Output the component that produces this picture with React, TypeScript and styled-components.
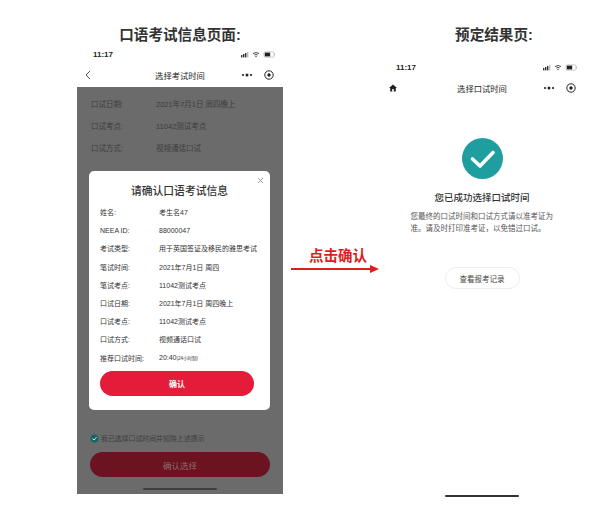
import React from 'react';
import styled, { createGlobalStyle } from 'styled-components';

const GlobalStyle = createGlobalStyle`
  html, body {
    margin: 0;
    padding: 0;
    background: #fff;
    font-family: "Liberation Sans", "Noto Sans CJK SC", sans-serif;
  }
`;

const Page = styled.div`
  width: 608px;
  height: 516px;
  display: flex;
  overflow: hidden;
  padding-left: 77px;
  box-sizing: border-box;
`;

const LeftColumn = styled.div`
  width: 206px;
  height: 494px;
  display: flex;
  flex-direction: column;
`;

const RightColumn = styled.div`
  width: 200px;
  display: flex;
  flex-direction: column;
  margin-left: 6px;
`;

const PageTitle = styled.h1<{ $shift?: number }>`
  margin: 0;
  height: 46px;
  padding: 26px 0 0 ${(p) => p.$shift ?? 0}px;
  box-sizing: border-box;
  font-size: 14.6px;
  line-height: 18px;
  font-weight: 700;
  color: #333;
  text-align: center;
`;

const StatusBar = styled.div<{ $offset: number; $left: number }>`
  height: 17px;
  margin-top: ${(p) => p.$offset}px;
  display: flex;
  align-items: center;
  justify-content: space-between;
  padding: 0 8px 0 ${(p) => p.$left}px;
  font-size: 8px;
  font-weight: 700;
  color: #222;
`;

const NavBar = styled.div<{ $left: number }>`
  height: 24px;
  display: flex;
  align-items: center;
  padding: 0 9px 0 ${(p) => p.$left}px;
  color: #222;
`;

const NavTitle = styled.div<{ $pad: number }>`
  flex: 1;
  text-align: center;
  font-size: 8.3px;
  padding-left: ${(p) => p.$pad}px;
`;

const NavActions = styled.div`
  display: flex;
  align-items: center;
  gap: 11px;
`;

const Overlay = styled.div`
  position: relative;
  flex: 1;
  background: #6b6b6b;
  padding: 5px 0 0 12px;
  display: flex;
  flex-direction: column;
`;

const DimRow = styled.div`
  height: 22px;
  padding-left: 2px;
  display: flex;
  align-items: center;
  font-size: 7.5px;
  color: #3d3d3d;
`;

const DimLabel = styled.span`
  width: 65px;
`;

const Modal = styled.div`
  width: 181px;
  height: 239px;
  margin-top: 13px;
  background: #fff;
  border-radius: 5px;
  position: relative;
  padding: 13px 11px 0;
  box-sizing: border-box;
  display: flex;
  flex-direction: column;
`;

const CloseMark = styled.svg`
  position: absolute;
  top: 6px;
  right: 6px;
`;

const ModalTitle = styled.div`
  font-size: 10.8px;
  line-height: 15px;
  font-weight: 500;
  text-align: center;
  color: #333;
  margin-bottom: 4px;
`;

const InfoRow = styled.div`
  height: 18.2px;
  display: flex;
  align-items: center;
  font-size: 7px;
  color: #333;
  white-space: nowrap;
`;

const InfoLabel = styled.span`
  width: 59px;
  flex: none;
`;

const Small = styled.span`
  font-size: 4.5px;
`;

const ConfirmButton = styled.div`
  height: 25px;
  margin-top: 4px;
  width: 154px;
  border-radius: 13px;
  background: #e41c39;
  color: #fff;
  font-size: 8px;
  font-weight: 700;
  display: flex;
  align-items: center;
  justify-content: center;
`;

const AgreeRow = styled.div`
  margin: 22px 0 0 1px;
  height: 12px;
  display: flex;
  align-items: center;
  gap: 2px;
  font-size: 6.9px;
  color: #3d3d3d;
`;

const AgreeDot = styled.svg`
  flex: none;
`;

const DarkButton = styled.div`
  width: 180px;
  height: 25px;
  margin: 8px 0 0 1px;
  border-radius: 13px;
  background: #6b1320;
  color: #8e6a6e;
  font-size: 8.5px;
  display: flex;
  align-items: center;
  justify-content: center;
`;

const HomeBar = styled.div<{ $dark?: boolean; $width: number }>`
  width: ${(p) => p.$width}px;
  height: 2px;
  background: ${(p) => (p.$dark ? '#3f3f3f' : '#333')};
  border-radius: 1px;
  align-self: center;
`;

const DimHome = styled(HomeBar)`
  position: absolute;
  bottom: 4px;
  left: 66px;
`;

const ArrowColumn = styled.div`
  width: 96px;
  padding: 248px 0 0 8px;
  box-sizing: border-box;
  display: flex;
  flex-direction: column;
`;

const ArrowLabel = styled.div`
  font-size: 14.5px;
  line-height: 17px;
  font-weight: 700;
  color: #dc1e1e;
  padding-left: 18px;
`;

const SuccessBody = styled.div`
  flex: 1;
  display: flex;
  flex-direction: column;
  align-items: center;
  padding: 38px 6px 0 0;
`;

const SuccessTitle = styled.div`
  margin-top: 12px;
  font-size: 9.5px;
  line-height: 14px;
  font-weight: 500;
  color: #333;
`;

const SuccessText = styled.div`
  width: 143px;
  margin-top: 6px;
  font-size: 7.5px;
  line-height: 12px;
  color: #555;
`;

const RecordButton = styled.div`
  margin-top: 32px;
  width: 75px;
  height: 22px;
  box-sizing: border-box;
  border: 1px solid #eee;
  border-radius: 12px;
  font-size: 7.5px;
  color: #444;
  display: flex;
  align-items: center;
  justify-content: center;
`;

const RightHome = styled(HomeBar)`
  margin-top: 206px;
`;

const StatusIcons = () => (
  <svg width="34" height="7" viewBox="0 0 34 7">
    <rect x="0" y="4" width="1.4" height="2.4" fill="#333" />
    <rect x="2" y="3" width="1.4" height="3.4" fill="#333" />
    <rect x="4" y="2" width="1.4" height="4.4" fill="#333" />
    <rect x="6" y="1" width="1.4" height="5.4" fill="#bbb" />
    <path d="M12 2.6 Q15 0.4 18 2.6 M13.4 4 Q15 2.8 16.6 4" stroke="#333" strokeWidth="0.9" fill="none" />
    <circle cx="15" cy="5.5" r="0.7" fill="#333" />
    <rect x="23" y="0.8" width="10" height="5.4" rx="1.4" fill="none" stroke="#aaa" strokeWidth="0.6" />
    <rect x="23.8" y="1.6" width="5.4" height="3.8" fill="#222" />
    <rect x="33.2" y="2.6" width="0.8" height="1.8" fill="#aaa" />
  </svg>
);

const MoreIcon = () => (
  <svg width="12" height="6" viewBox="0 0 12 6">
    <circle cx="2" cy="3" r="1.1" fill="#222" />
    <circle cx="6" cy="3" r="1.5" fill="#222" />
    <circle cx="10" cy="3" r="1.1" fill="#222" />
  </svg>
);

const TargetIcon = () => (
  <svg width="10" height="10" viewBox="0 0 10 10">
    <circle cx="5" cy="5" r="4.2" fill="none" stroke="#222" strokeWidth="1" />
    <circle cx="5" cy="5" r="1.7" fill="#222" />
  </svg>
);

const modalRows: [string, React.ReactNode][] = [
  ['姓名:', '考生名47'],
  ['NEEA ID:', '88000047'],
  ['考试类型:', '用于英国签证及移民的雅思考试'],
  ['笔试时间:', '2021年7月1日 周四'],
  ['笔试考点:', '11042测试考点'],
  ['口试日期:', '2021年7月1日 周四晚上'],
  ['口试考点:', '11042测试考点'],
  ['口试方式:', '视频通话口试'],
  ['推荐口试时间:', <>20:40<Small>(24小时制)</Small></>],
];

const dimRows = [
  ['口试日期:', '2021年7月1日 周四晚上'],
  ['口试考点:', '11042测试考点'],
  ['口试方式:', '视频通话口试'],
];

const App: React.FC = () => (
  <Page>
    <GlobalStyle />
    <LeftColumn>
      <PageTitle>口语考试信息页面:</PageTitle>
      <StatusBar $offset={0} $left={16}>
        <span>11:17</span>
        <StatusIcons />
      </StatusBar>
      <NavBar $left={8}>
        <svg width="6" height="10" viewBox="0 0 6 10">
          <path d="M5 1 L1 5 L5 9" stroke="#222" strokeWidth="0.8" fill="none" />
        </svg>
        <NavTitle $pad={28}>选择考试时间</NavTitle>
        <NavActions>
          <MoreIcon />
          <TargetIcon />
        </NavActions>
      </NavBar>
      <Overlay>
        {dimRows.map(([label, value]) => (
          <DimRow key={label}>
            <DimLabel>{label}</DimLabel>
            <span>{value}</span>
          </DimRow>
        ))}
        <Modal>
          <CloseMark width="7" height="7" viewBox="0 0 7 7">
            <path d="M1 1 L6 6 M6 1 L1 6" stroke="#777" strokeWidth="0.7" />
          </CloseMark>
          <ModalTitle>请确认口语考试信息</ModalTitle>
          {modalRows.map(([label, value]) => (
            <InfoRow key={label}>
              <InfoLabel>{label}</InfoLabel>
              <span>{value}</span>
            </InfoRow>
          ))}
          <ConfirmButton>确认</ConfirmButton>
        </Modal>
        <AgreeRow>
          <AgreeDot width="9" height="9" viewBox="0 0 9 9">
            <circle cx="4.5" cy="4.5" r="4" fill="#17656b" />
            <path d="M2.4 4.6 L4 6 L6.6 3.2" stroke="#cfe" strokeWidth="0.9" fill="none" />
          </AgreeDot>
          我已选择口试时间并知晓上述提示
        </AgreeRow>
        <DarkButton>确认选择</DarkButton>
        <DimHome $dark $width={74} />
      </Overlay>
    </LeftColumn>
    <ArrowColumn>
      <ArrowLabel>点击确认</ArrowLabel>
      <svg width="88" height="8" viewBox="0 0 88 8">
        <rect x="0" y="3" width="81" height="2" fill="#dc1e1e" />
        <path d="M79 0 L88 4 L79 8 Z" fill="#dc1e1e" />
      </svg>
    </ArrowColumn>
    <RightColumn>
      <PageTitle $shift={18}>预定结果页:</PageTitle>
      <StatusBar $offset={13} $left={11}>
        <span>11:17</span>
        <StatusIcons />
      </StatusBar>
      <NavBar $left={4}>
        <svg width="8" height="8" viewBox="0 0 8 8">
          <path d="M4 0.5 L8 4 H6.8 V7.5 H4.8 V5 H3.2 V7.5 H1.2 V4 H0 Z" fill="#222" />
        </svg>
        <NavTitle $pad={24}>选择口试时间</NavTitle>
        <NavActions>
          <MoreIcon />
          <TargetIcon />
        </NavActions>
      </NavBar>
      <SuccessBody>
        <svg width="41" height="41" viewBox="0 0 41 41">
          <circle cx="20.5" cy="20.5" r="20.5" fill="#1f9e9f" />
          <path d="M10.5 21 L18 28 L31 14.5" stroke="#fff" strokeWidth="3.6" fill="none" strokeLinecap="round" strokeLinejoin="round" />
        </svg>
        <SuccessTitle>您已成功选择口试时间</SuccessTitle>
        <SuccessText>您最终的口试时间和口试方式请以准考证为准。请及时打印准考证{'\uFF0C'}以免错过口试。</SuccessText>
        <RecordButton>查看报考记录</RecordButton>
        <RightHome $width={74} />
      </SuccessBody>
    </RightColumn>
  </Page>
);

export default App;
